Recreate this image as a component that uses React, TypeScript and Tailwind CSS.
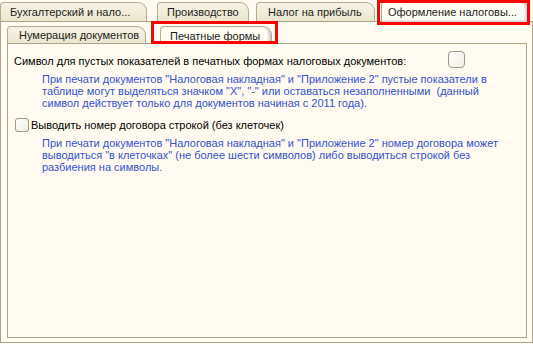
import React from "react";

function TopTab({ label, w, ml, pl, active }: { label: string; w: string; ml: string; pl: string; active?: boolean }) {
  return (
    <div
      className={
        "flex items-center whitespace-nowrap border-l border-t border-r border-[#b3ad8e] rounded-tl-[4px] rounded-tr-[9px] " +
        w +
        " " +
        ml +
        " " +
        pl +
        (active
          ? " h-[21px] bg-[#fffcf2] -mb-[1px] z-10 shadow-[inset_-2px_-1px_3px_rgba(110,100,140,0.4)]"
          : " h-[19px] bg-gradient-to-b from-[#f7f3e4] to-[#ece6cf]")
      }
    >
      <span className="text-[#1c1c1c]">{label}</span>
    </div>
  );
}

function InnerTab({ label, w, ml, pl, active }: { label: string; w: string; ml: string; pl: string; active?: boolean }) {
  return (
    <div
      className={
        "flex items-center whitespace-nowrap border-l border-t border-r border-[#b3ad8e] rounded-tl-[4px] rounded-tr-[9px] " +
        w +
        " " +
        ml +
        " " +
        pl +
        (active
          ? " h-[18px] bg-[#fffcf2] -mb-[1px] z-10 shadow-[inset_-2px_-1px_3px_rgba(110,100,140,0.4)]"
          : " h-[17px] bg-gradient-to-b from-[#f7f3e4] to-[#ece6cf]")
      }
    >
      <span className="text-[#1c1c1c]">{label}</span>
    </div>
  );
}

export default function App() {
  return (
    <div
      className="relative w-[533px] h-[344px] bg-[#fffbf0] text-[11px] leading-[12px] text-black overflow-hidden"
      style={{ fontFamily: '"Liberation Sans", Arial, sans-serif' }}
    >
      {/* top tabs row */}
      <div className="flex items-end h-[21px]">
        <TopTab label="Бухгалтерский  и нало..." w="w-[147px]" ml="ml-[0px]" pl="pl-[9px]" />
        <TopTab label="Производство" w="w-[92px]" ml="ml-[10px]" pl="pl-[9px]" />
        <TopTab label="Налог на прибыль" w="w-[119px]" ml="ml-[7px]" pl="pl-[11px]" />
        <TopTab label="Оформление налоговы..." w="w-[148px]" ml="ml-[6px]" pl="pl-[6px]" active />
      </div>

      {/* outer panel */}
      <div className="relative w-[533px] h-[322px] border border-[#aaa587] bg-[#fffbf0] pl-[6px] pr-[5px]">
        {/* inner tabs row */}
        <div className="flex items-end h-[21px]">
          <InnerTab label="Нумерация документов" w="w-[139px]" ml="ml-[0px]" pl="pl-[11px]" />
          <InnerTab label="Печатные формы" w="w-[112px]" ml="ml-[14px]" pl="pl-[9px]" active />
        </div>

        {/* inner panel */}
        <div className="w-[520px] h-[295px] border border-[#aaa587] bg-[#fffbf0] pl-[6px] pt-[7px]">
          <div className="flex items-start">
            <div className="w-[434px] mt-[4px] whitespace-nowrap">
              Символ для пустых показателей в печатных формах налоговых документов:
            </div>
            <div className="w-[17px] h-[17px] rounded-[4px] border border-[#9c9882] bg-gradient-to-br from-[#fdfdfb] to-[#f1efe6]" />
          </div>

          <div className="mt-[5px] pl-[28px] text-[#3552cc] whitespace-pre">
            <div>При печати документов "Налоговая накладная" и "Приложение 2" пустые показатели в</div>
            <div>таблице могут выделяться значком "X", "-" или оставаться незаполненными  (данный</div>
            <div>символ действует только для документов начиная с 2011 года).</div>
          </div>

          <div className="flex items-center mt-[9px] pl-[1px]">
            <div className="w-[14px] h-[14px] rounded-[3px] border border-[#9c9882] bg-gradient-to-br from-[#fdfdfb] to-[#f1efe6]" />
            <span className="ml-[2px] whitespace-nowrap">Выводить номер договора строкой (без клеточек)</span>
          </div>

          <div className="mt-[5px] pl-[28px] text-[#3552cc] whitespace-pre">
            <div>При печати документов "Налоговая накладная" и "Приложение 2" номер договора может</div>
            <div>выводиться "в клеточках" (не более шести символов) либо выводиться строкой без</div>
            <div>разбиения на символы.</div>
          </div>
        </div>
      </div>

      {/* red highlight rectangles */}
      <div className="absolute left-[377px] top-[0px] w-[153px] h-[25px] border-[3px] border-[#ff0000] pointer-events-none z-20" />
      <div className="absolute left-[151px] top-[21px] w-[127px] h-[23px] border-[3px] border-[#ff0000] pointer-events-none z-20" />
    </div>
  );
}
